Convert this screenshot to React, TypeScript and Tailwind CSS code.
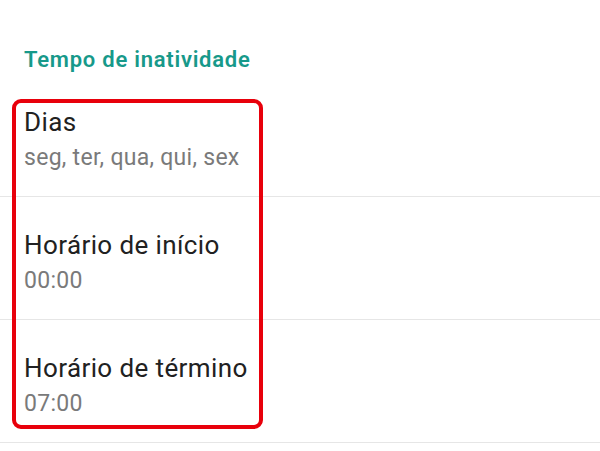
export default function App() {
  const items = [
    { title: "Dias", sub: "seg, ter, qua, qui, sex" },
    { title: "Horário de início", sub: "00:00" },
    { title: "Horário de término", sub: "07:00" },
  ];
  return (
    <div className="relative w-[600px] h-[451px] bg-white overflow-hidden" style={{ fontFamily: "Roboto, 'Noto Sans', sans-serif" }}>
      <div className="h-[74px] pl-[24px] pt-[46px]">
        <div className="text-[22px] leading-[28px] font-semibold tracking-[0.75px] text-[#17998a]">Tempo de inatividade</div>
      </div>
      {items.map((it, i) => (
        <div key={i} className="h-[123px] pl-[24px] pt-[32px] border-b border-[#e6e6e6]">
          <div className="text-[26px] leading-[32px] tracking-[0.4px] text-[#212121]">{it.title}</div>
          <div className="mt-[5px] text-[23px] leading-[30px] tracking-[0.28px] text-[#7a7a7a]">{it.sub}</div>
        </div>
      ))}
      <div className="absolute left-[12px] top-[99px] w-[251px] h-[330px] border-[4px] border-[#e8000b] rounded-[9px]" />
    </div>
  );
}
